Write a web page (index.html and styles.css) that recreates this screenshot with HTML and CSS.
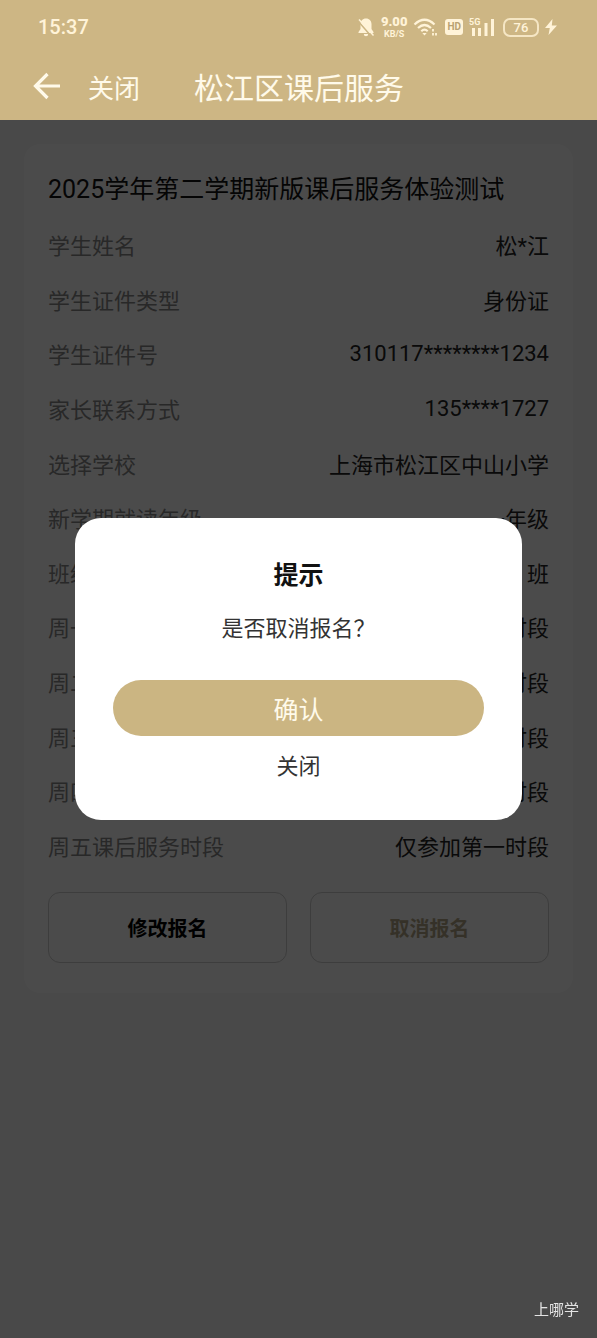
FILE: index.html
```html
<!DOCTYPE html>
<html lang="zh-CN">
<head>
<meta charset="utf-8">
<meta name="viewport" content="width=device-width, initial-scale=1">
<title>松江区课后服务</title>
<link rel="stylesheet" href="styles.css">
</head>
<body>
<header class="top">
  <div class="status">
    <span class="time">15:37</span>
    <div class="indicators">
      <svg width="18" height="20" viewBox="0 0 18 20" fill="currentColor"><path d="M9 1.500c-3.500 0-5.500 2.500-5.500 5.500v5L1.500 15v1h15v-1l-2-3V7C14.500 4 12.500 1.500 9 1.500zM6.800 17a2.200 2.200 0 0 0 4.400 0z"/><path d="M1 4l13 15" stroke="#cdb684" stroke-width="1.500"/><path d="M2 2.500l14.500 16" stroke="currentColor" stroke-width="1.500"/></svg>
      <span class="speed"><b>9.00</b><span>KB/S</span></span>
      <svg width="26" height="20" viewBox="0 0 26 20" fill="none" stroke="currentColor" stroke-width="2.200"><path d="M1.500 7.500Q11.500-2 21.500 7.500M5 11q6.500-6 13 0M8.300 14.200q3.200-3 6.400 0"/><path d="M11.500 18.500l-2.200-2.500h4.400z" fill="currentColor" stroke="none"/><path d="M20 12v2.500M20 16v2.500M23 16v2.500" stroke-width="1.800"/></svg>
      <span class="hd">HD</span>
      <svg width="28" height="20" viewBox="0 0 28 20" fill="currentColor"><text x="0" y="8" class="net">5G</text><path d="M3 11h3v8H3zM9 11h3v8H9zM15.500 6h3v13h-3zM22 2h3v17h-3z"/></svg>
      <span class="battery">76</span>
      <svg width="12" height="18" viewBox="0 0 12 18" fill="currentColor"><path d="M7.500 1L0 10h4.800L3.500 17 12 7.500H6.800z"/></svg>
    </div>
  </div>
  <nav class="nav">
    <button class="back" type="button" aria-label="返回"><svg width="28" height="28" viewBox="0 0 28 28" fill="none" stroke="currentColor" stroke-width="3.200"><path d="M27 14H3M14.500 2L2.500 14l12 12"/></svg></button>
    <button class="close" type="button">关闭</button>
    <h1 class="title">松江区课后服务</h1>
  </nav>
</header>
<main class="page">
  <section class="card">
    <h2 class="card-title">2025学年第二学期新版课后服务体验测试</h2>
    <dl class="fields">
      <div class="field"><dt>学生姓名</dt><dd>松*江</dd></div>
      <div class="field"><dt>学生证件类型</dt><dd>身份证</dd></div>
      <div class="field"><dt>学生证件号</dt><dd>310117********1234</dd></div>
      <div class="field"><dt>家长联系方式</dt><dd>135****1727</dd></div>
      <div class="field"><dt>选择学校</dt><dd>上海市松江区中山小学</dd></div>
      <div class="field"><dt>新学期就读年级</dt><dd>一年级</dd></div>
      <div class="field"><dt>班级</dt><dd>1 班</dd></div>
      <div class="field"><dt>周一课后服务时段</dt><dd>仅参加第一时段</dd></div>
      <div class="field"><dt>周二课后服务时段</dt><dd>仅参加第一时段</dd></div>
      <div class="field"><dt>周三课后服务时段</dt><dd>仅参加第一时段</dd></div>
      <div class="field"><dt>周四课后服务时段</dt><dd>仅参加第一时段</dd></div>
      <div class="field"><dt>周五课后服务时段</dt><dd>仅参加第一时段</dd></div>
    </dl>
    <div class="actions">
      <button class="action" type="button">修改报名</button>
      <button class="action action-cancel" type="button">取消报名</button>
    </div>
  </section>
</main>
<div class="overlay">
  <div class="dialog" role="dialog" aria-modal="true" aria-labelledby="dialog-title">
    <h2 class="dialog-title" id="dialog-title">提示</h2>
    <p class="dialog-text">是否取消报名？</p>
    <button class="confirm" type="button">确认</button>
    <button class="dismiss" type="button">关闭</button>
  </div>
</div>
<div class="watermark">上哪学</div>
</body>
</html>
```
FILE: styles.css
```css
* { box-sizing: border-box; }
body {
  margin: 0;
  min-height: 100vh;
  background: #f3f3f3;
  font-family: Roboto, "Noto Sans CJK SC", sans-serif;
  color: #1c1c1c;
}
h1, h2, p, dl, dd { margin: 0; }
button {
  padding: 0;
  border: 0;
  background: none;
  color: inherit;
  font-family: inherit;
  cursor: pointer;
}
svg { display: block; }

.top {
  position: relative;
  z-index: 2;
  height: 120px;
  background: #cdb684;
  color: #fffaea;
}
.status {
  display: flex;
  align-items: center;
  justify-content: space-between;
  height: 54px;
  padding: 0 40px 0 38px;
  color: #fff3d8;
}
.time { font-size: 20px; font-weight: 500; }
.indicators { display: flex; align-items: center; gap: 6px; }
.speed {
  display: flex;
  flex-direction: column;
  align-items: center;
  font-size: 9px;
  font-weight: 700;
  line-height: 10px;
}
.speed b { font-size: 13px; line-height: 14px; }
.hd {
  padding: 0 2px;
  border-radius: 3px;
  background: #fff3d8;
  color: #b9a271;
  font-size: 10px;
  font-weight: 700;
  line-height: 16px;
}
.net { font: 700 9px Roboto, sans-serif; }
.battery {
  width: 36px;
  border: 2px solid #f5e6c4;
  border-radius: 7px;
  font-size: 13px;
  font-weight: 500;
  line-height: 15px;
  text-align: center;
}
.nav {
  display: flex;
  align-items: center;
  height: 64px;
  padding: 0 33px;
}
.close { margin-left: 27px; font-size: 26px; }
.title { margin-left: 54px; font-size: 30px; font-weight: 400; }

.page { padding: 24px; }
.card {
  padding: 26px 24px 30px;
  border-radius: 16px;
  background: #fcfcfc;
}
.card-title { font-size: 25px; font-weight: 400; line-height: 40px; color: #111; }
.fields {
  display: grid;
  grid-auto-rows: 1fr;
  min-height: 655px;
  margin-top: 7px;
}
.field {
  display: flex;
  align-items: center;
  justify-content: space-between;
  font-size: 22px;
  color: #222;
}
.field dt { color: #888; }
.actions {
  display: grid;
  grid-template-columns: 1fr 1fr;
  gap: 23px;
  padding-top: 20px;
}
.action {
  height: 71px;
  border: 1px solid #ccc;
  border-radius: 12px;
  color: #000;
  font-size: 20px;
  font-weight: 700;
}
.action-cancel { color: #b3a685; }

.overlay {
  position: fixed;
  inset: 0;
  z-index: 1;
  display: flex;
  align-items: center;
  justify-content: center;
  background: rgba(0, 0, 0, .7);
}
.dialog {
  display: flex;
  flex-direction: column;
  width: 75%;
  padding: 39px 38px 34px;
  border-radius: 26px;
  background: #fff;
  color: #333;
  text-align: center;
}
.dialog-title { font-size: 25px; font-weight: 700; line-height: 38px; color: #111; }
.dialog-text { margin-top: 18px; font-size: 22px; line-height: 32px; }
.confirm {
  height: 56px;
  margin-top: 35px;
  border-radius: 28px;
  background: #cbb582;
  color: #fffaea;
  font-size: 25px;
}
.dismiss { margin-top: 12px; font-size: 22px; line-height: 38px; }

.watermark {
  position: fixed;
  right: 18px;
  bottom: 16px;
  z-index: 3;
  color: #e4e4e4;
  font-size: 15px;
  line-height: 24px;
}
```
